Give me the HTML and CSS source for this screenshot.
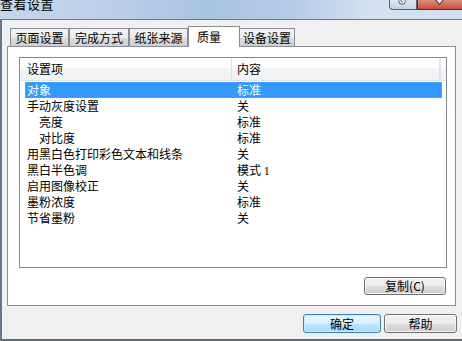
FILE: index.html
```html
<!DOCTYPE html>
<html>
<head>
<meta charset="utf-8">
<link rel="stylesheet" href="styles.css">
</head>
<body>
<div class="window">
  <div class="titlebar">
    <div class="title">查看设置</div>
    <div class="controls">
      <div class="btn-help">
        <svg width="28" height="9" viewBox="0 0 28 9"><path d="M10.5 0 Q10.5 3 13 3 Q15.5 3 15.5 0" fill="none" stroke="#34455c" stroke-width="3"/><path d="M10.5 0 Q10.5 3 13 3 Q15.5 3 15.5 0" fill="none" stroke="#fff" stroke-width="1.4"/><rect x="13.5" y="0" width="2" height="1.5" fill="#fff"/></svg>
      </div>
      <div class="btn-close">
        <svg width="45" height="9" viewBox="0 0 45 9"><path d="M17 -4 L22 2 L27 -4" fill="none" stroke="#3b1410" stroke-width="4"/><path d="M17 -4 L22 2 L27 -4" fill="none" stroke="#fff" stroke-width="2.2"/></svg>
      </div>
    </div>
  </div>
  <div class="body">
    <div class="tabs">
      <div class="tab t1">页面设置</div>
      <div class="tab t2">完成方式</div>
      <div class="tab t3">纸张来源</div>
      <div class="tab sel">质量</div>
      <div class="tab t5">设备设置</div>
    </div>
    <div class="panel">
      <div class="list">
        <div class="header">
          <div class="hcell h1">设置项</div>
          <div class="hcell h2">内容</div>
          <div class="hrest"></div>
        </div>
        <div class="rows">
          <div class="row selected"><span class="c1">对象</span><span class="c2">标准</span></div>
          <div class="row"><span class="c1">手动灰度设置</span><span class="c2">关</span></div>
          <div class="row"><span class="c1 ind">亮度</span><span class="c2">标准</span></div>
          <div class="row"><span class="c1 ind">对比度</span><span class="c2">标准</span></div>
          <div class="row"><span class="c1">用黑白色打印彩色文本和线条</span><span class="c2">关</span></div>
          <div class="row"><span class="c1">黑白半色调</span><span class="c2">模式 <span class="num">1</span></span></div>
          <div class="row"><span class="c1">启用图像校正</span><span class="c2">关</span></div>
          <div class="row"><span class="c1">墨粉浓度</span><span class="c2">标准</span></div>
          <div class="row"><span class="c1">节省墨粉</span><span class="c2">关</span></div>
        </div>
      </div>
      <div class="copyrow">
        <div class="button copy">复制(C)</div>
      </div>
    </div>
    <div class="buttons">
      <div class="button default ok">确定</div>
      <div class="button help">帮助</div>
    </div>
  </div>
</div>
</body>
</html>
```
FILE: styles.css
```css
* { box-sizing: border-box; }
html, body {
  margin: 0;
  padding: 0;
  width: 462px;
  height: 341px;
  overflow: hidden;
  background: #f0f0f0;
  font-family: "Noto Sans CJK SC", "Liberation Sans", sans-serif;
  font-size: 12px;
  color: #000;
}
.window {
  width: 462px;
  height: 341px;
  display: flex;
  flex-direction: column;
  position: relative;
}
.titlebar {
  height: 20px;
  flex: none;
  display: flex;
  align-items: flex-start;
  background: linear-gradient(90deg, #c3d6ec 0%, #bdd1ea 20%, #a9c3e3 45%, #b7cde8 65%, #d3e1f2 80%, #cfdff1 100%);
  border-bottom: 1px solid #6b7787;
  overflow: hidden;
}
.title {
  font-size: 13px;
  line-height: 13px;
  margin-top: -3px;
  color: #000;
  letter-spacing: 0.5px;
}
.controls {
  margin-left: auto;
  display: flex;
  margin-right: 0;
}
.btn-help {
  width: 28px;
  height: 10px;
  background: linear-gradient(#dfe6ef, #c6d1de);
  border: 1px solid #54637a;
  border-top: none;
  border-bottom-left-radius: 4px;
  display: flex;
}
.btn-close {
  width: 45px;
  height: 10px;
  background: linear-gradient(#dd8e7c, #c8503c);
  border: 1px solid #5d2b26;
  border-top: none;
  border-right: none;
  display: flex;
}
.body {
  flex: 1;
  display: flex;
  flex-direction: column;
  border-left: 2px solid #66778a;
  border-bottom: 2px solid #5d6b7b;
  padding: 6px 0 0 5px;
  background: #f0f0f0;
}
.tabs {
  height: 20px;
  display: flex;
  align-items: flex-end;
  padding-left: 3px;
  position: relative;
  z-index: 1;
}
.tab {
  height: 18px;
  border: 1px solid #898c95;
  border-bottom: none;
  background: linear-gradient(#f3f3f3 0%, #ebebeb 50%, #dddddd 51%, #cfcfcf 100%);
  display: flex;
  align-items: center;
  justify-content: center;
  line-height: 16px;
  padding-top: 1px;
  white-space: nowrap;
}
.t1 { width: 59px; }
.t2 { width: 60px; }
.t3 { width: 59px; }
.t5 { width: 56px; margin-left: -1px; }
.tab.sel {
  width: 52px;
  height: 21px;
  margin-bottom: -1px;
  background: #fff;
  justify-content: flex-start;
  padding-left: 8px;
  align-items: flex-start;
  padding-top: 2px;
  position: relative;
  z-index: 2;
}
.panel {
  width: 449px;
  height: 260px;
  border: 1px solid #898c95;
  background: #fff;
  padding: 10px 8px 10px 11px;
  display: flex;
  flex-direction: column;
}
.list {
  width: 428px;
  height: 211px;
  border: 1px solid #828790;
  background: #fff;
  display: flex;
  flex-direction: column;
}
.header {
  height: 23px;
  display: flex;
  border-bottom: 1px solid #e5e5e5;
  background: linear-gradient(#ffffff 0%, #ffffff 45%, #f3f4f6 50%, #f1f2f4 100%);
  flex: none;
}
.hcell {
  line-height: 22px;
  border-right: 1px solid #dfe0e2;
}
.h1 { width: 212px; padding-left: 7px; }
.h2 { width: 209px; padding-left: 5px; border-right: 2px solid #e2e3e6; }
.hrest { flex: 1; }
.rows {
  padding-top: 1px;
  display: flex;
  flex-direction: column;
}
.row {
  height: 16px;
  line-height: 14px;
  margin-left: 5px;
  width: 417px;
  display: flex;
  padding-left: 2px;
  border: 1px solid transparent;
  white-space: nowrap;
}
.row.selected {
  background: #3399ff;
  color: #fff;
  border: 1px dotted #e3892e;
}
.c1 { width: 210px; padding-left: 0; margin-left: -1px; }
.c1.ind { padding-left: 12px; }
.c2 { flex: 1; }
.num { font-family: "Liberation Serif", serif; font-size: 12px; }
.copyrow {
  margin-top: 9px;
  display: flex;
  justify-content: flex-end;
  padding-right: 1px;
}
.button {
  height: 18px;
  border: 1px solid #707070;
  border-radius: 3px;
  background: linear-gradient(#f2f2f2 0%, #ebebeb 50%, #dddddd 51%, #cfcfcf 100%);
  display: flex;
  align-items: center;
  justify-content: center;
  line-height: 16px;
  box-shadow: inset 0 0 0 1px rgba(255,255,255,0.7);
}
.copy { width: 82px; }
.buttons {
  margin-top: 8px;
  display: flex;
  justify-content: flex-end;
  gap: 3px;
  padding-right: 5px;
}
.buttons .button { height: 19px; }
.ok { width: 78px; }
.help { width: 73px; }
.button.default {
  border-color: #3c7fb1;
  background: linear-gradient(#eaf6fd 0%, #d9f0fc 50%, #bee6fd 51%, #a7d9f5 100%);
  box-shadow: inset 0 0 0 1px #cfeafb;
}
```
